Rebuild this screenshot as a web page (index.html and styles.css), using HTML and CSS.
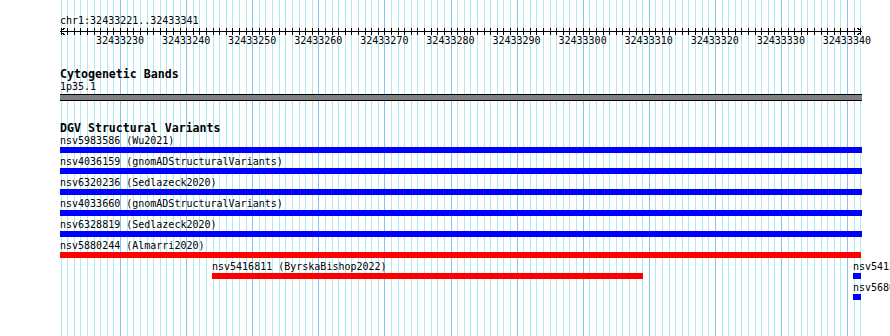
FILE: index.html
```html
<!DOCTYPE html>
<html lang="en">
<head>
  <meta charset="UTF-8">
  <title>chr1:32433221..32433341</title>
  <link rel="stylesheet" href="styles.css">
</head>
<body>
  <div class="view">
    <div class="grid" id="grid"></div>

    <div class="track ruler-track">
      <div class="ref-label">chr1:32433221..32433341</div>
      <svg class="ruler" id="ruler" width="804" height="7"></svg>
      <div class="ruler-labels">
        <span>32433230</span><span>32433240</span><span>32433250</span><span>32433260</span>
        <span>32433270</span><span>32433280</span><span>32433290</span><span>32433300</span>
        <span>32433310</span><span>32433320</span><span>32433330</span><span>32433340</span>
      </div>
    </div>

    <div class="track cyto-track">
      <div class="track-title">Cytogenetic Bands</div>
      <div class="band-label">1p35.1</div>
      <div class="band"></div>
    </div>

    <div class="track dgv-track">
      <div class="track-title">DGV Structural Variants</div>

      <div class="feature-row">
        <div class="feature" style="width:802px"><div class="feature-label">nsv5983586 (Wu2021)</div><div class="bar gain"></div></div>
      </div>
      <div class="feature-row">
        <div class="feature" style="width:802px"><div class="feature-label">nsv4036159 (gnomADStructuralVariants)</div><div class="bar gain"></div></div>
      </div>
      <div class="feature-row">
        <div class="feature" style="width:802px"><div class="feature-label">nsv6320236 (Sedlazeck2020)</div><div class="bar gain"></div></div>
      </div>
      <div class="feature-row">
        <div class="feature" style="width:802px"><div class="feature-label">nsv4033660 (gnomADStructuralVariants)</div><div class="bar gain"></div></div>
      </div>
      <div class="feature-row">
        <div class="feature" style="width:802px"><div class="feature-label">nsv6328819 (Sedlazeck2020)</div><div class="bar gain"></div></div>
      </div>
      <div class="feature-row">
        <div class="feature" style="width:801px"><div class="feature-label">nsv5880244 (Almarri2020)</div><div class="bar loss"></div></div>
      </div>
      <div class="feature-row">
        <div class="feature" style="margin-left:152px;width:431px"><div class="feature-label">nsv5416811 (ByrskaBishop2022)</div><div class="bar loss"></div></div>
        <div class="feature" style="margin-left:210px;width:8px"><div class="feature-label">nsv5412907 (Sedlazeck2020)</div><div class="bar gain"></div></div>
      </div>
      <div class="feature-row">
        <div class="feature" style="margin-left:793px;width:8px"><div class="feature-label">nsv5680371 (Wu2021)</div><div class="bar gain"></div></div>
      </div>
    </div>
  </div>

  <script>
    // one gridline / tick per base, major every 10 bp
    const left = 60.6;
    const bp = 6.609;
    const bases = 122;

    const grid = document.getElementById('grid');
    const ruler = document.getElementById('ruler');
    const ns = 'http://www.w3.org/2000/svg';
    let marks = '';

    for (let k = 0; k < bases; k++) {
      const x = Math.round(left + k * bp);
      const line = document.createElement('div');
      line.className = (k % 10 === 9) ? 'gridline major' : 'gridline';
      line.style.left = x + 'px';
      grid.appendChild(line);

      const tx = x - 60 + 0.5;
      marks += `<line x1="${tx}" y1="0" x2="${tx}" y2="7"/>`;
    }

    // axis and arrow heads
    marks += '<line x1="0" y1="3.5" x2="802" y2="3.5"/>';
    marks += '<polyline points="4.5,0 0.5,3.5 4.5,7" fill="none"/>';
    marks += '<polyline points="797.5,0 801.5,3.5 797.5,7" fill="none"/>';
    ruler.innerHTML = marks;
  </script>
</body>
</html>
```

FILE: styles.css
```css
body {
  margin: 0;
  overflow: hidden;
  background: white;
  color: black;
  font-family: 'DejaVu Sans Mono', monospace;
  font-size: 10px;
  line-height: 12px;
}
.view {
  position: relative;
  width: 890px;
  height: 336px;
  overflow: hidden;
}
.grid {
  position: absolute;
  top: 0;
  left: 0;
  right: 0;
  bottom: 0;
}
.gridline {
  position: absolute;
  top: 0;
  bottom: 0;
  width: 1px;
  background-color: #aeeaf0;
}
.gridline.major {
  background-color: #86c6ec;
}
.track {
  position: relative;
  padding-left: 60px;
}
.ruler-track {
  padding-top: 15px;
}
.ruler {
  display: block;
  margin-top: 1px;
  stroke: black;
  stroke-width: 1;
  shape-rendering: crispEdges;
}
.ruler-labels {
  display: flex;
  margin-left: 27px;
}
.ruler-labels span {
  flex: 0 0 66.09px;
  text-align: center;
}
.track-title {
  font-size: 11.6px;
  font-weight: bold;
  line-height: 14px;
}
.cyto-track {
  margin-top: 20px;
}
.band {
  width: 802px;
  height: 5px;
  margin-top: 1px;
  background-color: #808080;
  border-top: 1px solid black;
  border-bottom: 1px solid black;
}
.dgv-track {
  margin-top: 20px;
}
.feature-row {
  display: flex;
  margin-bottom: 3px;
}
.feature {
  flex: 0 0 auto;
}
.feature-label {
  white-space: nowrap;
}
.bar {
  height: 6px;
}
.gain {
  background-color: #0000ff;
}
.loss {
  background-color: #ff0000;
}
```
